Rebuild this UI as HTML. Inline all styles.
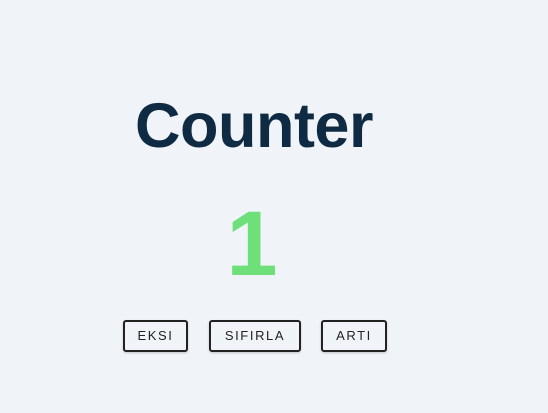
<!DOCTYPE html>
<html><head><meta charset="utf-8"><style>
html,body{margin:0;padding:0;width:548px;height:413px;background:#f0f4f8;overflow:hidden;font-family:"Liberation Sans",sans-serif}
.t{position:absolute;left:0;width:508px;text-align:center;top:88px;font-size:63px;font-weight:bold;color:#0f2a43;letter-spacing:-0.5px;line-height:76px}
.n{position:absolute;left:0;width:504px;text-align:center;top:189px;font-size:92px;font-weight:bold;color:#6ee07a;line-height:110px}
.b{position:absolute;top:320px;height:32px;box-sizing:border-box;border:2px solid #222;border-radius:3px;background:#f0f4f8;font-size:13px;letter-spacing:1.6px;color:#222;text-align:center;line-height:28px;box-shadow:0 1px 2px rgba(0,0,0,.2)}
</style></head><body>
<div class="t">Counter</div>
<div class="n">1</div>
<div class="b" style="left:123px;width:65px">EKSI</div>
<div class="b" style="left:209px;width:92px">SIFIRLA</div>
<div class="b" style="left:321px;width:66px">ARTI</div>
</body></html>
